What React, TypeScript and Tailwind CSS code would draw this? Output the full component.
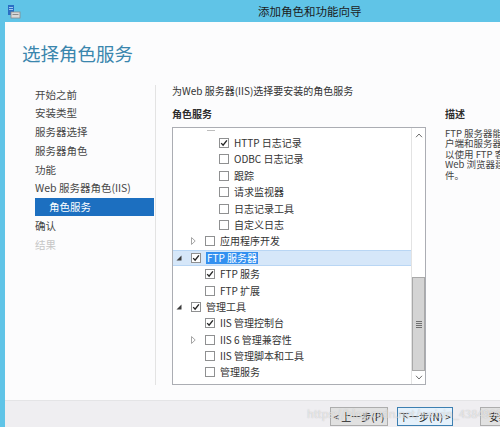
import React from "react";

type Row = {
  level: 0 | 1 | 2;
  text: string;
  checked?: boolean;
  expander?: "open" | "closed";
  selected?: boolean;
};

const ROWS: Row[] = [
  { level: 2, text: "HTTP 日志记录", checked: true },
  { level: 2, text: "ODBC 日志记录" },
  { level: 2, text: "跟踪" },
  { level: 2, text: "请求监视器" },
  { level: 2, text: "日志记录工具" },
  { level: 2, text: "自定义日志" },
  { level: 1, text: "应用程序开发", expander: "closed" },
  { level: 0, text: "FTP 服务器", checked: true, expander: "open", selected: true },
  { level: 1, text: "FTP 服务", checked: true },
  { level: 1, text: "FTP 扩展" },
  { level: 0, text: "管理工具", checked: true, expander: "open" },
  { level: 1, text: "IIS 管理控制台", checked: true },
  { level: 1, text: "IIS 6 管理兼容性", expander: "closed" },
  { level: 1, text: "IIS 管理脚本和工具" },
  { level: 1, text: "管理服务" },
];

const INDENT = ["pl-[4px]", "pl-[18px]", "pl-[32px]"];

const NAV = [
  { label: "开始之前" },
  { label: "安装类型" },
  { label: "服务器选择" },
  { label: "服务器角色" },
  { label: "功能" },
  { label: "Web 服务器角色(IIS)" },
  { label: "角色服务", active: true },
  { label: "确认" },
  { label: "结果", disabled: true },
];

const DESC = [
  "FTP 服务器能够在客",
  "户端和服务器之间传输文件。用户可",
  "以使用 FTP 客户端或启用 FTP 的",
  "Web 浏览器建立连接并传输文",
  "件。",
];

const CheckBox = ({ checked }: { checked?: boolean }) => (
  <span className="w-[10px] h-[10px] border border-[#8f9091] bg-white flex items-center justify-center shrink-0">
    {checked && (
      <svg width="8" height="8" viewBox="0 0 8 8">
        <path d="M1.2 4.1 L3.1 6.2 L6.9 1.4" stroke="#262626" strokeWidth="1.4" fill="none" />
      </svg>
    )}
  </span>
);

const Expander = ({ kind }: { kind?: "open" | "closed" }) => (
  <span className="w-[14px] h-full flex items-center shrink-0">
    {kind === "open" && (
      <svg width="6" height="6" viewBox="0 0 6 6" className="-ml-[1px]">
        <polygon points="5.5,0.5 5.5,5.5 0.5,5.5" fill="#3c3c3c" />
      </svg>
    )}
    {kind === "closed" && (
      <svg width="5" height="8" viewBox="0 0 5 8">
        <polygon points="0.5,0.5 4.2,4 0.5,7.5" fill="none" stroke="#a6a6a6" strokeWidth="1" />
      </svg>
    )}
  </span>
);

const TreeRow = ({ row }: { row: Row }) => (
  <div
    className={`h-[16.4px] shrink-0 flex items-center ${INDENT[row.level]} ${
      row.selected ? "bg-[#d6e7f9] border-y border-[#b9d6f4]" : ""
    }`}
  >
    <Expander kind={row.expander} />
    <CheckBox checked={row.checked} />
    <span
      className={`ml-[5px] text-[10px] leading-[12px] whitespace-nowrap ${
        row.selected ? "bg-[#3390f0] text-white px-[1px]" : "text-[#333]"
      }`}
    >
      {row.text}
    </span>
  </div>
);

const Chevron = ({ up }: { up?: boolean }) => (
  <svg width="8" height="5" viewBox="0 0 8 5">
    <path d={up ? "M1 4.2 L4 1 L7 4.2" : "M1 0.8 L4 4 L7 0.8"} stroke="#6f6f6f" strokeWidth="1" fill="none" />
  </svg>
);

const ServerIcon = () => (
  <svg width="14" height="14" viewBox="0 0 14 14">
    <rect x="1" y="0" width="6" height="10" fill="#2a6fc4" />
    <rect x="2" y="2" width="4" height="1" fill="#9cc6f0" />
    <rect x="2" y="4" width="4" height="1" fill="#9cc6f0" />
    <rect x="4" y="7" width="9" height="6" fill="#d9d9d9" stroke="#8a8a8a" strokeWidth="0.8" />
    <rect x="5.5" y="9" width="6" height="1" fill="#8a8a8a" />
  </svg>
);

export default function App() {
  return (
    <div className="w-[500px] h-[427px] overflow-hidden flex flex-col bg-[#60c4e7] font-['Noto_Sans_CJK_SC','Noto_Sans',sans-serif] relative">
      {/* title bar */}
      <div className="h-[22px] flex items-center shrink-0">
        <span className="ml-[7px] mt-[1px] shrink-0">
          <ServerIcon />
        </span>
        <span className="ml-[237px] text-[11.5px] leading-[14px] text-[#1b1b1b] whitespace-nowrap">
          添加角色和功能向导
        </span>
      </div>

      <div className="flex-1 ml-[5px] flex flex-col min-h-0">
        {/* main page */}
        <div className="flex-1 bg-[#fcfcfd] flex flex-col">
          <div className="pl-[17px] pt-[19px] text-[18.5px] leading-[24px] text-[#3a86ad] whitespace-nowrap">
            选择角色服务
          </div>

          <div className="mt-[20px] flex">
            {/* wizard steps */}
            <div className="ml-[30px] w-[121px] h-[300px] shrink-0 border-r border-[#e3e3e3] pr-[1px]">
              {NAV.map((n) => (
                <div
                  key={n.label}
                  className={`h-[18.75px] flex items-center text-[10.5px] whitespace-nowrap ${
                    n.active
                      ? "bg-[#1c6fc0] text-white pl-[14px]"
                      : n.disabled
                      ? "text-[#c6c6c6]"
                      : "text-[#474747]"
                  }`}
                >
                  {n.label}
                </div>
              ))}
            </div>

            {/* role services */}
            <div className="ml-[16px] w-[254px] shrink-0 flex flex-col">
              <div className="h-[10px] flex items-center text-[10px] text-[#333] whitespace-nowrap">
                为Web 服务器(IIS)选择要安装的角色服务
              </div>
              <div className="mt-[13px] h-[10px] flex items-center text-[10px] font-bold text-[#2d2d2d]">
                角色服务
              </div>
              <div className="mt-[9px] h-[258px] border border-[#abadb3] bg-white flex">
                <div className="flex-1 overflow-hidden flex flex-col">
                  <div className="h-[6.8px] shrink-0 flex items-start">
                    <span className="ml-[34px] mt-[2px] w-[8px] h-[1px] bg-[#bdbdbd]" />
                  </div>
                  {ROWS.map((r) => (
                    <TreeRow key={r.text} row={r} />
                  ))}
                </div>
                <div className="w-[14px] shrink-0 border-l border-[#e3e3e3] bg-white flex flex-col">
                  <div className="h-[14px] flex items-center justify-center">
                    <Chevron up />
                  </div>
                  <div className="h-[135px]" />
                  <div className="h-[94px] bg-[#d4d4d4] border border-[#a9a9a9] flex flex-col items-center justify-center gap-[1px]">
                    <span className="w-[6px] h-[1px] bg-[#707070]" />
                    <span className="w-[6px] h-[1px] bg-[#707070]" />
                    <span className="w-[6px] h-[1px] bg-[#707070]" />
                    <span className="w-[6px] h-[1px] bg-[#707070]" />
                  </div>
                  <div className="flex-1 flex items-center justify-center">
                    <Chevron />
                  </div>
                </div>
              </div>
            </div>

            {/* description */}
            <div className="ml-[19px] flex-1 min-w-0 overflow-hidden flex flex-col">
              <div className="mt-[23px] h-[10px] flex items-center text-[10px] font-bold text-[#2d2d2d]">
                描述
              </div>
              <div className="mt-[9.5px] text-[9.5px] leading-[10.5px] text-[#444]">
                {DESC.map((l) => (
                  <div key={l} className="whitespace-nowrap">
                    {l}
                  </div>
                ))}
              </div>
            </div>
          </div>
        </div>

        {/* footer */}
        <div className="h-[27px] shrink-0 bg-[#efeef1] border-t border-[#e4e4e6] flex items-start pt-[6px] pl-[325px] gap-[9px]">
          <button className="w-[58px] h-[19px] shrink-0 bg-[#e1e1e1] border border-[#adadad] text-[10px] leading-[12px] text-[#222] whitespace-nowrap">
            &lt; 上一步(P)
          </button>
          <button className="w-[56px] h-[19px] shrink-0 bg-[#e5f1fb] border border-[#3c7fb1] text-[10px] leading-[12px] text-[#222] whitespace-nowrap">
            下一步(N) &gt;
          </button>
          <button className="ml-[18px] w-[60px] h-[19px] shrink-0 bg-[#e1e1e1] border border-[#adadad] text-[10px] leading-[12px] text-[#222] whitespace-nowrap text-left pl-[8px]">
            安装(I)
          </button>
        </div>
      </div>

      {/* watermark */}
      <div className="absolute left-[307px] top-[406px] text-[11px] leading-[14px] text-white/60 whitespace-nowrap pointer-events-none [text-shadow:0_0_1px_rgba(120,120,120,0.5)]">
        https://blog.csdn.net/weixin_43849065
      </div>
    </div>
  );
}
